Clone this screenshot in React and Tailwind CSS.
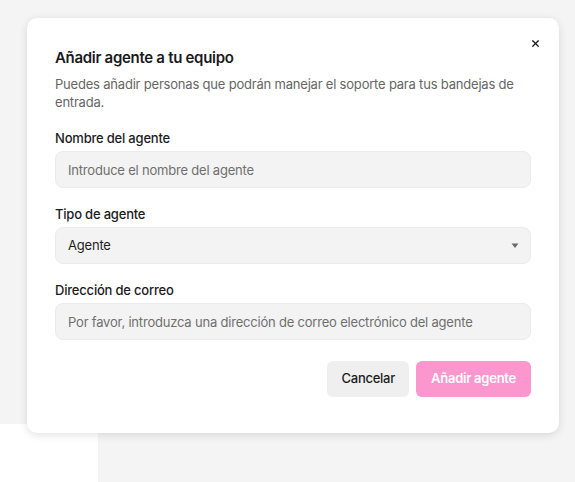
import { X } from 'lucide-react';

const FIELDS = [
  { label: 'Nombre del agente', placeholder: 'Introduce el nombre del agente' },
  { label: 'Tipo de agente', select: 'Agente' },
  { label: 'Dirección de correo', placeholder: 'Por favor, introduzca una dirección de correo electrónico del agente' }
];

function Field({ field }) {
  return (
    <div className="flex flex-col gap-[3px]">
      <label className="text-[13px] font-medium leading-5 tracking-[-0.2px] text-[#1c1c1c]">{field.label}</label>
      {field.select ? (
        <div className="flex h-[37px] items-center justify-between rounded-lg border border-[#ebebeb] bg-[#f3f3f3] pl-3 pr-[11px] text-[13px] tracking-[-0.2px] text-[#1f1f1f]">
          <span>{field.select}</span>
          <svg width="8" height="6" viewBox="0 0 8 6" aria-hidden="true">
            <path d="M0.5 0.5 H7.5 L4 5 Z" fill="#6b6b6b" />
          </svg>
        </div>
      ) : (
        <input
          className="h-[37px] rounded-lg border border-[#ebebeb] bg-[#f3f3f3] px-3 text-[13px] tracking-[-0.2px] text-[#1f1f1f] outline-none placeholder:text-[#6f6f6f]"
          placeholder={field.placeholder}
        />
      )}
    </div>
  );
}

export default function App() {
  return (
    <div className="relative h-[482px] w-[575px] overflow-hidden bg-[#f4f4f4] font-['Inter',sans-serif]">
      {/* page behind the dialog */}
      <div className="flex h-full flex-col">
        <div className="h-[424px]" />
        <div className="flex flex-1">
          <div className="w-[98px] bg-white" />
        </div>
      </div>

      <div className="absolute left-[27px] top-[18px] w-[532px] rounded-[10px] bg-white px-7 pb-9 pt-[29px] shadow-[0_2px_8px_rgba(0,0,0,0.12)]">
        <button className="absolute right-[18px] top-[19px] flex h-3 w-3 items-center justify-center text-[#1a1a1a]">
          <X size={11} strokeWidth={2.6} />
        </button>
        <h2 className="text-[15px] font-semibold leading-[22px] tracking-[-0.3px] text-[#1a1a1a]">Añadir agente a tu equipo</h2>
        <p className="mt-[7px] text-[13px] leading-[17.5px] tracking-[-0.2px] text-[#666666]">
          Puedes añadir personas que podrán manejar el soporte para tus bandejas de entrada.
        </p>
        <div className="mt-[17px] flex flex-col gap-4">
          {FIELDS.map((f) => (
            <Field key={f.label} field={f} />
          ))}
        </div>
        <div className="mt-[21px] flex justify-end gap-[7px]">
          <button className="h-9 rounded-md bg-[#efefef] px-[14px] text-[13px] font-medium tracking-[-0.25px] text-[#1c1c1c]">Cancelar</button>
          <button className="h-9 rounded-md bg-[#fb96cf] px-[15px] text-[13px] font-semibold tracking-[-0.25px] text-white">Añadir agente</button>
        </div>
      </div>
    </div>
  );
}
